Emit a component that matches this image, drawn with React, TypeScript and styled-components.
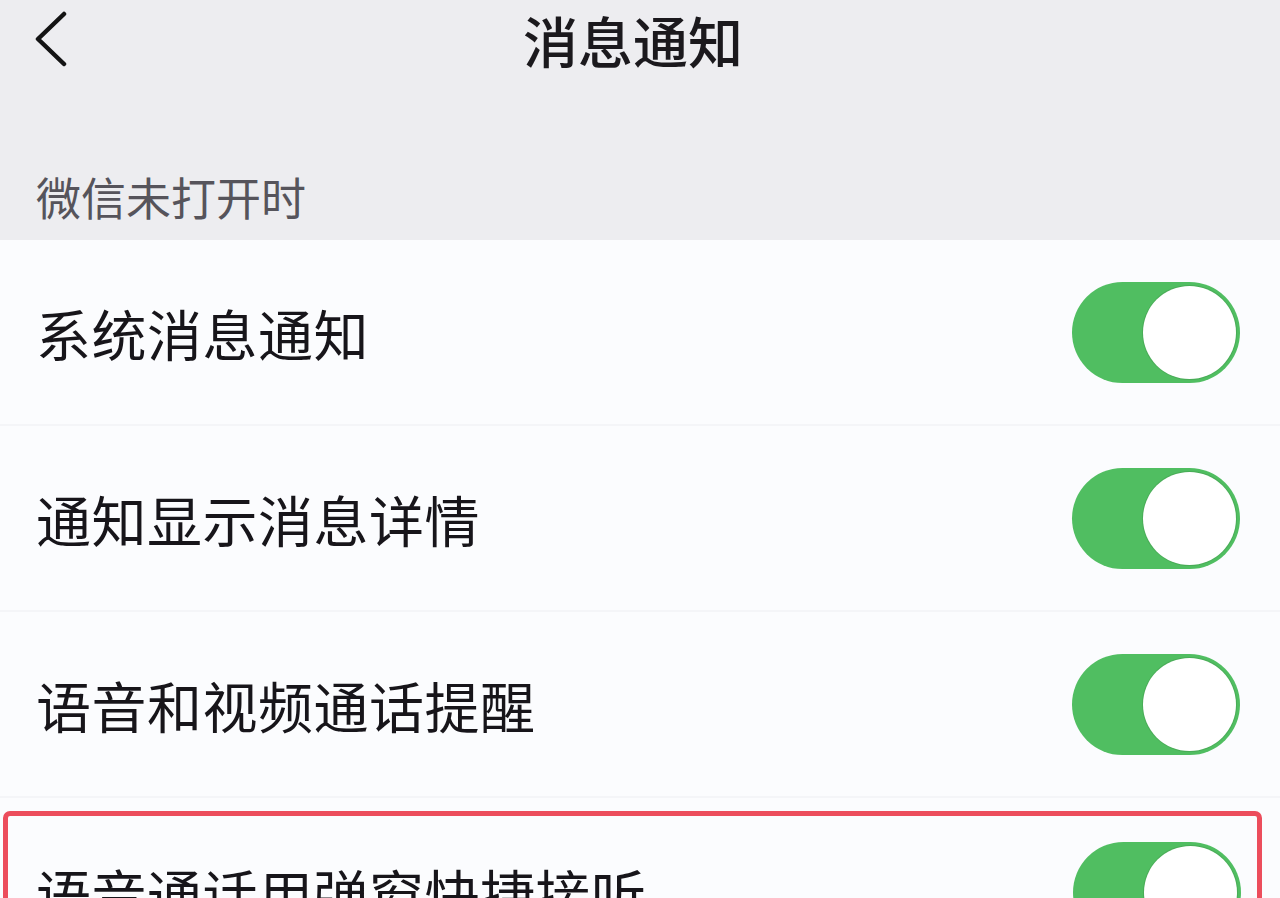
import styled, { createGlobalStyle } from "styled-components";

const GlobalStyle = createGlobalStyle`
  html, body {
    margin: 0;
    padding: 0;
    background: #fbfcfe;
    overflow: hidden;
  }
  * {
    box-sizing: border-box;
  }
  body {
    font-family: "Noto Sans CJK SC", "Noto Sans", sans-serif;
  }
`;

const settings = [
  { label: "系统消息通知", on: true },
  { label: "通知显示消息详情", on: true },
  { label: "语音和视频通话提醒", on: true },
];

const App = () => {
  return (
    <>
      <GlobalStyle />
      <Page>
        <TopArea>
          <NavBar>
            <BackButton aria-label="返回">
              <svg width="40" height="60" viewBox="0 0 40 60">
                <polyline
                  points="29,5 3,30 29,55"
                  fill="none"
                  stroke="#141414"
                  strokeWidth="4.5"
                  strokeLinecap="round"
                  strokeLinejoin="round"
                />
              </svg>
            </BackButton>
            <Title>消息通知</Title>
          </NavBar>
          <SectionLabel>微信未打开时</SectionLabel>
        </TopArea>

        <List>
          {settings.map((s) => (
            <Row key={s.label}>
              <RowText>{s.label}</RowText>
              <Toggle $on={s.on}>
                <Knob />
              </Toggle>
            </Row>
          ))}
          <Highlight>
            <HighlightRow>
              <RowText>语音通话用弹窗快捷接听</RowText>
              <Toggle $on>
                <Knob />
              </Toggle>
            </HighlightRow>
          </Highlight>
        </List>
      </Page>
    </>
  );
};

export default App;

const Page = styled.div`
  width: 1280px;
  height: 898px;
  overflow: hidden;
  background: #fbfcfe;
`;

const TopArea = styled.div`
  background: #ededf0;
  height: 240px;
  display: flex;
  flex-direction: column;
`;

const NavBar = styled.div`
  position: relative;
  height: 86px;
  display: flex;
  align-items: flex-start;
  justify-content: center;
  padding-top: 4px;
`;

const BackButton = styled.div`
  position: absolute;
  left: 35px;
  top: 9px;
  width: 40px;
  height: 60px;
`;

const Title = styled.h1`
  margin: 0 0 0 -14px;
  font-size: 55px;
  line-height: 70px;
  font-weight: 500;
  color: #1b191d;
`;

const SectionLabel = styled.div`
  margin-top: 81px;
  padding-left: 36px;
  font-size: 45px;
  line-height: 60px;
  color: #56545b;
`;

const List = styled.div`
  display: flex;
  flex-direction: column;
`;

const Row = styled.div`
  height: 186px;
  display: flex;
  align-items: center;
  justify-content: space-between;
  padding: 0 40px 0 36px;
  border-bottom: 2px solid #f4f5f8;
`;

const RowText = styled.span`
  font-size: 55px;
  color: #17151a;
  letter-spacing: 0.5px;
`;

const Toggle = styled.div<{ $on?: boolean }>`
  width: 168px;
  height: 101px;
  border-radius: 51px;
  background: ${({ $on }) => ($on ? "#50be61" : "#e5e5ea")};
  display: flex;
  align-items: center;
  justify-content: ${({ $on }) => ($on ? "flex-end" : "flex-start")};
  padding: 0 4px;
  flex-shrink: 0;
`;

const Knob = styled.div`
  width: 93px;
  height: 93px;
  border-radius: 50%;
  background: #ffffff;
  box-shadow: 0 0 0 1px rgba(60, 140, 70, 0.35);
`;

const Highlight = styled.div`
  margin: 13px 18px 0 3px;
  border: 5px solid #ec4d5c;
  border-radius: 7px;
`;

const HighlightRow = styled.div`
  height: 152px;
  display: flex;
  align-items: center;
  justify-content: space-between;
  padding: 0 16px 0 28px;
`;
